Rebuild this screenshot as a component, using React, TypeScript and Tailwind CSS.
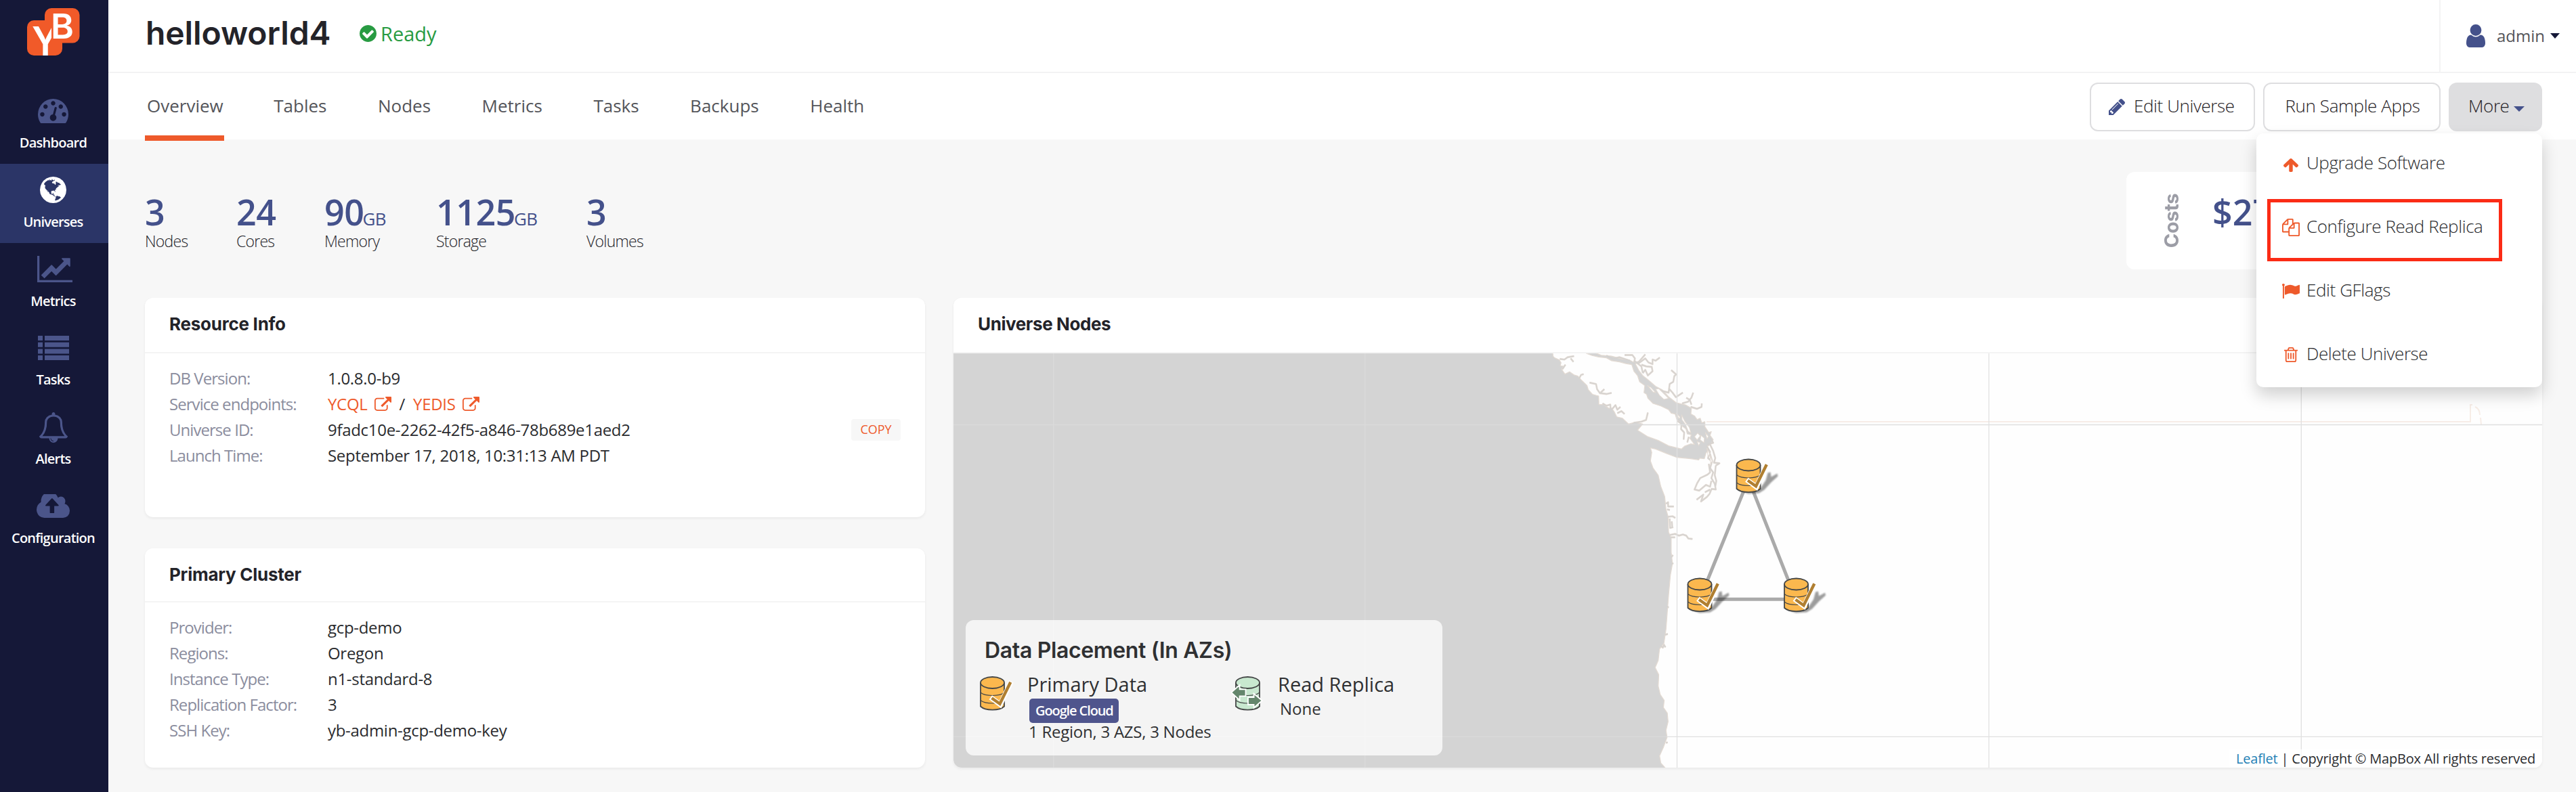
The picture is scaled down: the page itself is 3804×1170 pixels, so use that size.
import React from "react";

type GlyphProps = { d: string; box: string; className: string };

function Glyph({ d, box, className }: GlyphProps) {
  return (
    <svg viewBox={box} className={className} fill="currentColor" preserveAspectRatio="none" aria-hidden="true">
      <path d={d} />
    </svg>
  );
}

const ICON = {
  dashboard:
    "M384 1152q0-53-37.5-90.5t-90.5-37.5-90.5 37.5-37.5 90.5 37.5 90.5 90.5 37.5 90.5-37.5 37.5-90.5zm192-448q0-53-37.5-90.5t-90.5-37.5-90.5 37.5-37.5 90.5 37.5 90.5 90.5 37.5 90.5-37.5 37.5-90.5zm428 481l101-382q6-26-7.5-48.5t-38.5-29.5-48 6.5-30 39.5l-101 382q-60 5-107 43.5t-63 98.5q-20 77 20 146t117 89 146-20 89-117q16-60-6-117t-72-91zm660-33q0-53-37.5-90.5t-90.5-37.5-90.5 37.5-37.5 90.5 37.5 90.5 90.5 37.5 90.5-37.5 37.5-90.5zm-640-640q0-53-37.5-90.5t-90.5-37.5-90.5 37.5-37.5 90.5 37.5 90.5 90.5 37.5 90.5-37.5 37.5-90.5zm448 192q0-53-37.5-90.5t-90.5-37.5-90.5 37.5-37.5 90.5 37.5 90.5 90.5 37.5 90.5-37.5 37.5-90.5zm320 448q0 261-141 483-19 29-54 29h-1402q-35 0-54-29-141-221-141-483 0-182 71-348t191-286 286-191 348-71 348 71 286 191 191 286 71 348z",
  globe:
    "M896 128q209 0 385.5 103t279.5 279.5 103 385.5-103 385.5-279.5 279.5-385.5 103-385.5-103-279.5-279.5-103-385.5 103-385.5 279.5-279.5 385.5-103zm274 521q-2 1-9.5 9.5t-13.5 9.5q2 0 4.5-5t5-11 3.5-7q6-7 22-15 14-6 52-12 34-8 51 11-2-2 9.5-13t14.5-12q3-2 15-4.5t15-7.5l2-22q-12 1-17.5-7t-6.5-21q0 2-6 8 0-7-4.5-8t-11.5 1-9 1q-10-3-15-7.5t-8-16.5-4-15q-2-5-9.5-11t-9.5-10q-1-2-2.5-5.5t-3-6.5-4-5.5-5.5-2.5-7 5-7.5 10-4.5 5q-3-2-6-1.5t-4.5 1-4.5 3-5 3.5q-3 2-8.5 3t-8.5 2q15-5-1-11-10-4-16-3 9-4 7.5-12t-8.5-14h5q-1-4-8.5-8.5t-17.5-8.5-13-6q-8-5-34-9.5t-33-.5q-5 6-4.5 10.5t4 14 3.5 12.5q1 6-5.5 13t-6.5 12q0 7 14 15.5t10 21.5q-3 8-16 16t-16 12q-5 8-1.5 18.5t10.5 16.5q2 2 1.5 4t-3.5 4.5-5.5 4-6.5 3.5l-3 2q-11 5-20.5-6t-13.5-26q-7-25-16-30-23-8-29 1-5-13-41-26-25-9-58-4 6-1 0-15-7-15-19-12 3-6 4-17.5t1-13.5q3-13 12-23 1-1 7-8.5t9.5-13.5.5-6q35 4 50-11 5-5 11.5-17t10.5-17q9-6 14-5.5t14.5 5.5 14.5 5q14 1 15.5-11t-7.5-20q12 1 3-17-4-7-8-9-12-4-27 5-8 4 2 8-1-1-9.5 10.5t-16.5 17.5-16-5q-1-1-5.5-13.5t-9.5-13.5q-8 0-16 15 3-8-11-15t-24-8q19-12-8-27-7-4-20.5-5t-19.5 4q-5 7-5.5 11.5t5 8 10.5 5.5 11.5 4 8.5 3q14 10 8 14-2 1-8.5 3.5t-11.5 4.5-6 4q-3 4 0 14t-2 14q-5-5-9-17.5t-7-16.5q7 9-25 6l-10-1q-4 0-16 2t-20.5 1-13.5-8q-4-8 0-20 1-4 4-2-4-3-11-9.5t-10-8.5q-46 15-94 41 6 1 12-1 5-2 13-6.5t10-5.5q34-14 42-7l5-5q14 16 20 25-7-4-30-1-20 6-22 12 7 12 5 18-4-3-11.5-10t-14.5-11-15-5q-16 0-22 1-146 80-235 222 7 7 12 8 4 1 5 9t2.5 11 11.5-3q9 8 3 19 1-1 44 27 19 17 21 21 3 11-10 18-1-2-9-9t-9-4q-3 5 .5 18.5t10.5 12.5q-7 0-9.5 16t-2.5 35.5-1 23.5l2 1q-3 12 5.5 34.5t21.5 19.5q-13 3 20 43 6 8 8 9 3 2 12 7.5t15 10 10 10.5q4 5 10 22.5t14 23.5q-2 6 9.5 20t10.5 23q-1 0-2.5 1t-2.5 1q3 7 15.5 14t15.5 13q1 3 2 10t3 11 8 2q2-20-24-62-15-25-17-29-3-5-5.5-15.5t-4.5-14.5q2 0 6 1.5t8.5 3.5 7.5 4 2 3q-3 7 2 17.5t12 18.5 17 19 12 13q6 6 14 19.5t0 13.5q9 0 20 10.5t17 19.5q5 8 8 26t5 24q2 7 8.5 13.5t12.5 9.5l16 8 13 7q5 2 18.5 10.5t21.5 11.5q10 4 16 4t14.5-2.5 13.5-3.5q15-2 29 15t21 21q36 19 55 11-2 1 .5 7.5t8 15.5 9 14.5 5.5 8.5q5 6 18 15t18 15q6-4 7-9-3 8 7 20t18 10q14-3 14-32-31 15-49-18 0-1-2.5-5.5t-4-8.5-2.5-8.5 0-7.5 5-3q9 0 10-3.5t-2-12.5-4-13q-1-8-11-20t-12-15q-5 9-16 8t-16-9q0 1-1.5 5.5t-1.5 6.5q-13 0-15-1 1-3 2.5-17.5t3.5-22.5q1-4 5.5-12t7.5-14.5 4-12.5-4.5-9.5-17.5-2.5q-19 1-26 20-1 3-3 10.5t-5 11.5-9 7q-7 3-24 2t-24-5q-13-8-22.5-29t-9.5-37q0-10 2.5-26.5t3-25-5.5-24.5q3-2 9-9.5t10-10.5q2-1 4.5-1.5t4.5 0 4-1.5 3-6q-1-1-4-3-3-3-4-3 7 3 28.5-1.5t27.5 1.5q15 11 22-2 0-1-2.5-9.5t-.5-13.5q5 27 29 9 3 3 15.5 5t17.5 5q3 2 7 5.5t5.5 4.5 5-.5 8.5-6.5q10 14 12 24 11 40 19 44 7 3 11 2t4.5-9.5 0-14-1.5-12.5l-1-8v-18l-1-8q-15-3-18.5-12t1.5-18.5 15-18.5q1-1 8-3.5t15.5-6.5 12.5-8q21-19 15-35 7 0 11-9-1 0-5-3t-7.5-5-4.5-2q9-5 2-16 5-3 7.5-11t7.5-10q9 12 21 2 7-8 1-16 5-7 20.5-10.5t18.5-9.5q7 2 8-2t1-12 3-12q4-5 15-9t13-5l17-11q3-4 0-4 18 2 31-11 10-11-6-20 3-6-3-9.5t-15-5.5q3-1 11.5-.5t10.5-1.5q15-10-7-16-17-5-43 12zm-163 877q206-36 351-189-3-3-12.5-4.5t-12.5-3.5q-18-7-24-8 1-7-2.5-13t-8-9-12.5-8-11-7q-2-2-7-6t-7-5.5-7.5-4.5-8.5-2-10 1l-3 1q-3 1-5.5 2.5t-5.5 3-4 3 0 2.5q-21-17-36-22-5-1-11-5.5t-10.5-7-10-1.5-11.5 7q-5 5-6 15t-2 13q-7-5 0-17.5t2-18.5q-3-6-10.5-4.5t-12 4.5-11.5 8.5-9 6.5-8.5 5.5-8.5 7.5q-3 4-6 12t-5 11q-2-4-11.5-6.5t-9.5-5.5q2 10 4 35t5 38q7 31-12 48-27 25-29 40-4 22 12 26 0 7-8 20.5t-7 21.5q0 6 2 16z",
  metrics:
    "M2048 1536v128h-2048v-1536h128v1408h1920zm-128-1248v435q0 21-19.5 29.5t-35.5-7.5l-121-121-633 633q-10 10-23 10t-23-10l-233-233-416 416-192-192 585-585q10-10 23-10t23 10l233 233 464-464-121-121q-16-16-7.5-35.5t29.5-19.5h435q14 0 23 9t9 23z",
  tasks: "M0 0h7v7h-7zM10 0h36v7h-36zM0 9.7h7v7h-7zM10 9.7h36v7h-36zM0 19.4h7v7h-7zM10 19.4h36v7h-36zM0 29h7v7h-7zM10 29h36v7h-36z",
  bell:
    "M912 1696q0-16-16-16-59 0-101.5-42.5t-42.5-101.5q0-16-16-16t-16 16q0 73 51.5 124.5t124.5 51.5q16 0 16-16zm-666-288h1300q-266-300-266-832 0-51-24-105t-69-103-121.5-80.5-169.5-31.5-169.5 31.5-121.5 80.5-69 103-24 105q0 532-266 832zm1482 0q0 52-38 90t-90 38h-448q0 106-75 181t-181 75-181-75-75-181h-448q-52 0-90-38t-38-90q50-42 91-88t85-119.5 74.5-158.5 50-206 19.5-260q0-152 117-282.5t307-158.5q-8-19-8-39 0-40 28-68t68-28 68 28 28 68q0 20-8 39 190 28 307 158.5t117 282.5q0 139 19.5 260t50 206 74.5 158.5 85 119.5 91 88z",
  cloud:
    "M1216 864q0-14-9-23l-352-352q-9-9-23-9t-23 9l-351 351q-10 12-10 24 0 14 9 23t23 9h224v352q0 13 9.5 22.5t22.5 9.5h192q13 0 22.5-9.5t9.5-22.5v-352h224q13 0 22.5-9.5t9.5-22.5zm640 288q0 159-112.5 271.5t-271.5 112.5h-1088q-185 0-316.5-131.5t-131.5-316.5q0-130 70-240t188-165q-2-30-2-43 0-212 150-362t362-150q156 0 285.5 87t188.5 231q71-62 166-62 106 0 181 75t75 181q0 76-41 138 130 31 213.5 135.5t83.5 238.5z",
  check:
    "M1412 734q0-28-18-46l-91-90q-19-19-45-19t-45 19l-408 407-226-226q-19-19-45-19t-45 19l-91 90q-18 18-18 46 0 27 18 45l362 362q19 19 45 19 27 0 46-19l543-543q18-18 18-45zm252 162q0 209-103 385.5t-279.5 279.5-385.5 103-385.5-103-279.5-279.5-103-385.5 103-385.5 279.5-279.5 385.5-103 385.5 103 279.5 279.5 103 385.5z",
  user:
    "M1536 1399q0 109-62.5 187t-150.5 78h-854q-88 0-150.5-78t-62.5-187q0-85 8.5-160.5t31.5-152 58.5-131 94-89 134.5-34.5q131 128 313 128t313-128q76 0 134.5 34.5t94 89 58.5 131 31.5 152 8.5 160.5zm-256-887q0 159-112.5 271.5t-271.5 112.5-271.5-112.5-112.5-271.5 112.5-271.5 271.5-112.5 271.5 112.5 112.5 271.5z",
  pencil:
    "M491 1536l91-91-235-235-91 91v107h128v128h107zm523-928q0-22-22-22-10 0-17 7l-542 542q-7 7-7 17 0 22 22 22 10 0 17-7l542-542q7-7 7-17zm-54-192l416 416-832 832h-416v-416zm683 96q0 53-37 90l-166 166-416-416 166-165q36-38 90-38 53 0 91 38l235 234q37 39 37 91z",
  arrowUp:
    "M1675 971q0 51-37 90l-75 75q-38 38-91 38-54 0-90-38l-294-293v704q0 52-37.5 84.5t-90.5 32.5h-128q-53 0-90.5-32.5t-37.5-84.5v-704l-294 293q-36 38-90 38t-90-38l-75-75q-38-38-38-90 0-53 38-91l651-651q35-37 90-37 54 0 91 37l651 651q37 39 37 91z",
  copy:
    "M1696 384q40 0 68 28t28 68v1216q0 40-28 68t-68 28h-960q-40 0-68-28t-28-68v-288h-544q-40 0-68-28t-28-68v-672q0-40 20-88t48-76l408-408q28-28 76-48t88-20h416q40 0 68 28t28 68v328q68-40 128-40h416zm-544 213l-299 299h299v-299zm-640-384l-299 299h299v-299zm196 647l316-316v-416h-384v416q0 40-28 68t-68 28h-416v640h512v-256q0-40 20-88t48-76zm956 804v-1152h-384v416q0 40-28 68t-68 28h-416v640h896z",
  flag:
    "M320 256q0 72-64 110v1266q0 13-9.5 22.5t-22.5 9.5h-64q-13 0-22.5-9.5t-9.5-22.5v-1266q-64-38-64-110 0-53 37.5-90.5t90.5-37.5 90.5 37.5 37.5 90.5zm1472 64v763q0 25-12.5 38.5t-39.5 27.5q-215 116-369 116-61 0-123.5-22t-108.5-48-115.5-48-142.5-22q-192 0-464 146-17 9-33 9-26 0-45-19t-19-45v-742q0-32 31-55 21-14 79-43 236-120 421-120 107 0 200 29t219 88q38 19 88 19 54 0 117.5-21t110-47 88-47 54.5-21q26 0 45 19t19 45z",
  trash:
    "M704 736v576q0 14-9 23t-23 9h-64q-14 0-23-9t-9-23v-576q0-14 9-23t23-9h64q14 0 23 9t9 23zm256 0v576q0 14-9 23t-23 9h-64q-14 0-23-9t-9-23v-576q0-14 9-23t23-9h64q14 0 23 9t9 23zm256 0v576q0 14-9 23t-23 9h-64q-14 0-23-9t-9-23v-576q0-14 9-23t23-9h64q14 0 23 9t9 23zm128 724v-948h-896v948q0 22 7 40.5t14.5 27 10.5 8.5h832q3 0 10.5-8.5t14.5-27 7-40.5zm-672-1076h448l-48-117q-7-9-17-11h-317q-10 2-17 11zm928 32v64q0 14-9 23t-23 9h-96v948q0 83-47 143.5t-113 60.5h-832q-66 0-113-58.5t-47-141.5v-952h-96q-14 0-23-9t-9-23v-64q0-14 9-23t23-9h309l70-167q15-37 54-63t79-26h320q40 0 79 26t54 63l70 167h309q14 0 23 9t9 23z",
  external:
    "M1472 992v320q0 119-84.5 203.5t-203.5 84.5h-832q-119 0-203.5-84.5t-84.5-203.5v-832q0-119 84.5-203.5t203.5-84.5h704q14 0 23 9t9 23v64q0 14-9 23t-23 9h-704q-66 0-113 47t-47 113v832q0 66 47 113t113 47h832q66 0 113-47t47-113v-320q0-14 9-23t23-9h64q14 0 23 9t9 23zm384-864v512q0 26-19 45t-45 19-45-19l-176-176-652 652q-10 10-23 10t-23-10l-114-114q-10-10-10-23t10-23l652-652-176-176q-19-19-19-45t19-45 45-19h512q26 0 45 19t19 45z",
};

const NAV = [
  { label: "Dashboard", d: ICON.dashboard, box: "0 256 1792 1408", size: "w-[45px] h-9" },
  { label: "Universes", d: ICON.globe, box: "128 128 1536 1536", size: "w-[39px] h-[39px]", active: true },
  { label: "Metrics", d: ICON.metrics, box: "0 128 2048 1536", size: "w-[52px] h-[39px] ml-1" },
  { label: "Tasks", d: ICON.tasks, box: "0 0 46 36", size: "w-[46px] h-9" },
  { label: "Alerts", d: ICON.bell, box: "64 0 1664 1792", size: "w-[42px] h-[45px]" },
  { label: "Configuration", d: ICON.cloud, box: "-64 256 1920 1280", size: "w-[49px] h-[35px]" },
];

function Sidebar() {
  return (
    <aside className="flex h-full w-40 shrink-0 flex-col bg-[#151838]">
      <div className="h-[125px] shrink-0 pt-3 pl-10">
        <svg className="h-[71px] w-[78px] overflow-visible" viewBox="40 12 78 71">
          <rect x="66" y="12" width="51.5" height="51.5" rx="10" fill="#f15a29" />
          <rect x="40" y="30" width="52" height="52" rx="10" fill="#f15a29" />
          <text x="47" y="82" fontSize="59" fontWeight="600" fill="#fff" textLength="40" lengthAdjust="spacingAndGlyphs" fontFamily="Inter, sans-serif">Y</text>
          <rect x="76" y="31" width="16" height="26" fill="#f15a29" />
          <text x="75" y="56.5" fontSize="51" fontWeight="600" fill="#fff" textLength="34" lengthAdjust="spacingAndGlyphs" fontFamily="Inter, sans-serif">B</text>
        </svg>
      </div>
      <nav>
        {NAV.map((n) => (
          <a
            key={n.label}
            className={`flex h-[116.75px] flex-col items-center pt-[14px] pr-[3px] ${n.active ? "bg-[#2b3567] text-white" : "text-[#4b558a]"}`}
          >
            <span className="flex h-[50px] items-center justify-center">
              <Glyph d={n.d} box={n.box} className={n.size} />
            </span>
            <span className="mt-[8px] text-[20px] leading-7 font-semibold tracking-[-0.75px] text-white">{n.label}</span>
          </a>
        ))}
      </nav>
    </aside>
  );
}

function TopBar() {
  return (
    <header className="flex h-[108px] shrink-0 border-b-2 border-[#f3f3f4] bg-white pl-[55px]">
      <h1 className="h-[97px] w-[316px] font-[Inter] text-[48px] leading-[97px] font-semibold tracking-[-0.1px] text-[#232329]">
        helloworld4
      </h1>
      <div className="flex h-[98px] items-center text-[#289b42]">
        <Glyph d={ICON.check} box="128 128 1536 1536" className="h-[25px] w-[25px]" />
        <span className="ml-1.5 text-[29px] leading-none">Ready</span>
      </div>
      <div className="ml-auto flex h-full w-[202px] items-center border-l-2 border-[#f3f3f4] pl-[38px]">
        <Glyph d={ICON.user} box="256 128 1280 1536" className="h-[34px] w-7 text-[#44518b]" />
        <span className="ml-[17px] text-[24px] leading-none text-[#54555a]">admin</span>
        <svg viewBox="0 0 14 8" className="ml-2 h-2 w-3.5">
          <path d="M0 0h14l-7 8z" fill="#151838" />
        </svg>
      </div>
    </header>
  );
}

const MENU = [
  { label: "Upgrade Software", d: ICON.arrowUp, box: "117 192 1558 1472", size: "w-[22px] h-5 mt-1" },
  { label: "Configure Read Replica", d: ICON.copy, box: "0 0 1792 1792", size: "w-[26px] h-[26px]" },
  { label: "Edit GFlags", d: ICON.flag, box: "64 128 1728 1536", size: "w-[26px] h-[22px]" },
  { label: "Delete Universe", d: ICON.trash, box: "192 128 1408 1536", size: "w-5 h-[22px]" },
];

function MoreMenu() {
  return (
    <div className="absolute top-[75px] right-0 z-20 h-[375px] w-[422px] rounded-[10px] bg-white pt-[18px] shadow-[0_12px_24px_rgba(0,0,0,0.18)]">
      {MENU.map((m) => (
        <div key={m.label} className="flex h-[94px] items-start pl-9">
          <span className="mt-[10px] flex h-[34px] w-[30px] items-center justify-center text-[#ee5a2b]">
            <Glyph d={m.d} box={m.box} className={m.size} />
          </span>
          <span className="mt-px ml-2 text-[26px] leading-[48px] font-[350] tracking-[-0.4px] text-[#2a2b2e]">{m.label}</span>
        </div>
      ))}
      <div className="absolute top-[97px] left-4 h-[92px] w-[347px] border-[5px] border-[#fb2b15]" />
    </div>
  );
}

const TABS = ["Overview", "Tables", "Nodes", "Metrics", "Tasks", "Backups", "Health"];

function TabBar() {
  return (
    <div className="flex h-[98px] shrink-0 bg-white pr-[50px] pl-[54px]">
      <div className="flex gap-[71.5px] text-[26px] leading-[96px] text-[#54555a]">
        {TABS.map((t, i) => (
          <a key={t} className={i === 0 ? "relative h-[100px] border-b-8 border-[#ee5a2b] pr-px pl-[3px]" : "px-0.5"}>
            {t}
          </a>
        ))}
      </div>
      <div className="relative mt-3.5 ml-auto flex h-[72px] text-[26px] leading-[64px] font-[350] tracking-[-0.4px] text-[#1f2024]">
        <button className="flex w-[244px] items-center rounded-[12px] border-2 border-[#dedee0] pl-[26px]">
          <Glyph d={ICON.pencil} box="128 149 1515 1515" className="h-6 w-6 text-[#44518b]" />
          <span className="-mt-1 ml-[13px]">Edit Universe</span>
        </button>
        <button className="ml-3 flex w-[262px] justify-center rounded-[12px] border-2 border-[#dedee0] pl-0.5">Run Sample Apps</button>
        <button className="ml-3 flex w-[138px] items-center rounded-[12px] bg-[#dedee0] pl-[29px]">
          <span className="-mt-1">More</span>
          <svg viewBox="0 0 16 8" className="mt-1.5 ml-1.5 h-2 w-4">
            <path d="M0 0h16l-8 8z" fill="#44518b" />
          </svg>
        </button>
        <MoreMenu />
      </div>
    </div>
  );
}

const STATS = [
  { value: "3", label: "Nodes", w: "w-[135px]" },
  { value: "24", label: "Cores", w: "w-[130px]" },
  { value: "90", unit: "GB", label: "Memory", w: "w-[165px]" },
  { value: "1125", unit: "GB", label: "Storage", w: "w-[222px]" },
  { value: "3", label: "Volumes", w: "w-[120px]" },
];

function Stats() {
  return (
    <div className="flex h-[234px] shrink-0">
      <div className="flex flex-1 pt-[71px]">
        {STATS.map((s) => (
          <div key={s.label} className={`shrink-0 ${s.w}`}>
            <div className="flex h-[64px] items-baseline text-[52px] leading-[72px] font-semibold text-[#44518b]">
              <span className="tracking-[-0.5px]">{s.value}</span>
              {s.unit && <span className="-ml-0.5 text-[26px] font-normal tracking-[-0.5px]">{s.unit}</span>}
            </div>
            <div className="text-[23px] leading-[30px] font-[350] tracking-[-0.75px] text-[#232329]">{s.label}</div>
          </div>
        ))}
      </div>
      <div className="mt-12 flex h-36 w-[614px] rounded-[12px] bg-white">
        <div className="flex w-[127px] items-center justify-center pl-1.5">
          <span className="rotate-180 font-[Inter] text-[29px] leading-9 font-bold tracking-[-0.4px] text-[#9c9da6] [writing-mode:vertical-rl]">
            Costs
          </span>
        </div>
        <span className="mt-[23px] text-[52px] leading-[72px] font-semibold text-[#44518b]">$27</span>
      </div>
    </div>
  );
}

function Link({ children }: { children: React.ReactNode }) {
  return (
    <a className="flex items-center text-[#ee5a2b]">
      {children}
      <Glyph d={ICON.external} box="64 64 1792 1536" className="ml-2.5 h-[21px] w-[25px]" />
    </a>
  );
}

function InfoCard({ title, rows, head }: { title: string; rows: [string, React.ReactNode][]; head: string }) {
  return (
    <section className="h-[324px] rounded-[12px] bg-white shadow-[0_2px_4px_rgba(0,0,0,0.06)]">
      <h2 className={`border-b-2 border-[#f4f4f4] pl-9 font-[Inter] text-[26px] font-[650] tracking-[-0.25px] text-[#232329] ${head}`}>
        {title}
      </h2>
      <dl className="grid grid-cols-[234px_1fr] pt-[17.5px] pr-9 pl-9 text-[24px] leading-[38px] auto-rows-[38px]">
        {rows.map(([k, v]) => (
          <React.Fragment key={k}>
            <dt className="tracking-[-0.95px] text-[#8b8d9e]">{k}</dt>
            <dd className="tracking-[-0.3px] text-[#2a2b2e]">{v}</dd>
          </React.Fragment>
        ))}
      </dl>
    </section>
  );
}

function Database({ replica = false }: { replica?: boolean }) {
  return (
    <g stroke="#454747" strokeWidth="1.8">
      <path
        d="M1 9.5V44.5C8 51.3 29 51.3 36 44.5V9.5"
        fill={replica ? "#c8e8cf" : "#fbb84e"}
      />
      <path d="M1 24C8 30 29 30 36 24M1 35.5C8 41.5 29 41.5 36 35.5" fill="none" strokeWidth="1.1" />
      <ellipse cx="18.5" cy="9.5" rx="17.5" ry="8.5" fill={replica ? "#c8e8cf" : "#fbb84e"} />
      {replica ? (
        <g fill="#64866c" stroke="#fff" strokeWidth="1.8">
          <path d="M-5.8 24L6.6 13V19.3H15.5V29.3H6.6V35.5z" />
          <path d="M39.8 36L27.6 25.8V31H19V42H27.6V46.5z" />
        </g>
      ) : (
        <g fill="none">
          <path d="M15.5 31L29.8 41.5L46 7.5" stroke="#fff" strokeWidth="7.5" transform="translate(.3 .3)" />
          <path d="M17.5 32.2L29.5 40.7L45.3 8.7" stroke="#b07f31" strokeWidth="4.4" />
        </g>
      )}
    </g>
  );
}

const OCEAN =
  "M-2075 1520V40H242L244 62 250 68 268 75 275 85 272 96 285 98 277 108 290 125 308 117 325 128 340 132 352 145 375 165 380 180 396 196 410 200 420 202 421 232 440 232 448 238 460 245 470 244 480 257 490 275 512 280 535 300 560 294 590 300 570 322 610 345 650 358 690 377 740 388 752 378 775 370 790 372 772 350 778 338 762 335 757 318 744 308 735 295 722 285 715 265 700 262 690 250 660 237 630 228 610 210 605 196 595 190 598 165 578 152 570 130 556 115 548 92 525 88 500 82 470 78 450 68 420 65 395 60 372 52V46H396L430 59 470 62 510 72 540 76 560 86 575 112 590 130 612 146 640 168 665 180 690 205 720 226 755 233 778 245 776 265 790 272 800 285 812 280 818 296 830 292 830 310 845 330 855 327 850 340 862 355 852 372 840 378 848 395 835 400 828 422 810 420 806 426 775 422 720 417 680 403 640 388 620 384 625 400 620 430 630 455 650 480 660 520 675 555 680 600 688 625 690 680 700 700 700 750 705 790 697 830 690 900 685 960 680 1020 672 1070 655 1090 650 1130 638 1155 652 1180 650 1220 658 1250 673 1270 670 1295 685 1315 688 1345 680 1375 684 1400 670 1435 655 1465 660 1490 676 1506V1520z";

const INLETS =
  "M270 72L288 74 300 66 325 62M312 70L323 82M280 108L292 92M345 140L352 128 362 125M385 155L410 160 414 178 425 192 450 195 470 191M442 178L428 190M435 228L450 236 465 232 466 248M470 250L485 234 492 250 504 240M492 262L508 255 520 265M555 296L585 292 603 286 610 260M450 60L475 72 500 66 540 78M520 58L550 58 560 70 556 88 575 82 600 56M570 90L600 70 612 84 628 90 628 74 640 78 656 67M585 92L604 98 625 100 628 115 610 130 600 110 590 122M560 80L585 98 590 120M655 182L690 190 694 160 708 152 712 132 719 126 700 111M690 175L705 190 718 206 745 190M742 228L765 222 778 208 785 190M758 208L772 216 778 232M775 240L800 247 817 240 818 228M725 290L740 300 738 318 750 330 748 355M768 345L762 365M850 350L862 366 840 372M838 380L850 398 842 420 856 430M850 372L862 395 870 420 865 436 886 438 872 446M848 400L858 430 850 455 862 470 855 490 868 510 872 530 856 528 848 545 838 556 815 572 824 548 798 566M872 446L868 480 874 500 870 520M845 440L850 470 840 478 812 490 800 508 790 530 808 534 834 514 850 520 855 500M830 540L850 530M680 580L688 575 688 590 710 590M684 600L695 602M688 626L705 624 716 630M694 632L696 665 708 662M702 642L704 660M694 690L715 686 730 692 745 688 758 692 766 702 782 704M698 698L715 698M700 768L707 760M702 792L708 788M658 1078L668 1085 672 1075 678 1084M676 1040L687 1037M684 940L690 945M680 1420L686 1417";

const ISLANDS =
  "M640 178L652 176 690 210 672 214 655 200zM608 165L622 172 640 190 630 188zM740 268L752 290 770 312 776 332 766 326 755 302 742 286zM720 262L734 276 730 282zM790 345L802 332 812 342 800 356zM815 340L828 350 826 366 812 356zM800 362L812 366 806 376zM832 330L844 344 838 352zM838 385L848 405 842 415zM850 410L858 430 852 440z";

function MapView() {
  return (
    <svg viewBox="1408 522 2346 612" className="block h-[612px] w-full">
      <defs>
        <filter id="soft" x="-20%" y="-20%" width="140%" height="140%">
          <feGaussianBlur stdDeviation="1.3" />
        </filter>
      </defs>
      <rect x="1408" y="522" width="2346" height="612" fill="#fefefe" />
      <path d="M2520 623H3648V598h3M3655 601q7 3 7 12M3663 617l1 10" fill="none" stroke="#f7ede7" strokeWidth="2" />
      <g transform="translate(2200 500) scale(.3827 .4209)" strokeLinejoin="round">
        <path d={INLETS} fill="none" stroke="#e6ddd5" strokeWidth="7" />
        <path d={OCEAN} fill="#d4d4d4" stroke="#e3dad2" strokeWidth="3" />
        <path d={INLETS} fill="none" stroke="#d4d2d0" strokeWidth="3.6" />
        <path d={ISLANDS} fill="#fefefe" stroke="#e3dad2" strokeWidth="2.5" />
      </g>
      <g strokeWidth="1.3" stroke="#e0e0e0">
        <path d="M2476.5 522v612M2937 522v612M3398.3 522v612M2476 627.5H3754M2461 1088.3H3754" />
        <path d="M1555.6 522v612M2015.6 522v612M1408 627.5H2476M1408 1088.3H2461" stroke="#dadada" />
      </g>
      <path d="M2582 708L2510 885.3H2652z" fill="none" stroke="#aaa" strokeWidth="5" />
      {[
        [2563.5, 677.5],
        [2491.5, 853.5],
        [2634, 853.5],
      ].map(([x, y]) => (
        <g key={x} transform={`translate(${x} ${y})`}>
          <path
            d="M4 47L36 44 44 32 47 21 51 20 52 27 61 22 62 26 52 35 42 46 34 51 18 52z"
            fill="#000"
            opacity=".38"
            filter="url(#soft)"
          />
          <Database />
        </g>
      ))}
    </svg>
  );
}

function Legend() {
  return (
    <div className="absolute bottom-[18px] left-[18px] h-[200px] w-[704px] rounded-[12px] bg-white/75 text-[#2f3032]">
      <h3 className="pt-9 pl-7 font-[Inter] text-[32px] leading-[18px] font-semibold tracking-[-0.35px]">Data Placement (In AZs)</h3>
      <div className="flex pt-[29px] pl-3">
        <svg className="h-[54px] w-[62px] shrink-0" viewBox="-9 0 62 54">
          <Database />
        </svg>
        <div className="ml-[17px] w-[300px]">
          <div className="text-[29px] leading-[24px]">Primary Data</div>
          <div className="mt-[9px] ml-[3px] h-9 w-[132px] rounded-[5px] bg-[#4f558d] pl-[9px] text-[20px] leading-9 font-semibold tracking-[-1.1px] whitespace-nowrap text-white">
            Google Cloud
          </div>
          <div className="ml-0.5 text-[24px] leading-[26px] tracking-[-0.25px]">1 Region, 3 AZS, 3 Nodes</div>
        </div>
        <svg className="-ml-[2px] h-[54px] w-[62px] shrink-0" viewBox="-9 0 62 54">
          <Database replica />
        </svg>
        <div className="ml-2.5">
          <div className="text-[29px] leading-[24px]">Read Replica</div>
          <div className="mt-1.5 ml-[3px] text-[24px] leading-9">None</div>
        </div>
      </div>
    </div>
  );
}

function NodesCard() {
  return (
    <section className="h-[694px] w-[2346px] overflow-hidden rounded-[12px] bg-white shadow-[0_2px_4px_rgba(0,0,0,0.06)]">
      <h2 className="h-[82px] border-b-2 border-[#f4f4f4] pl-9 font-[Inter] text-[26px] leading-[77px] font-[650] tracking-[-0.4px] text-[#232329]">
        Universe Nodes
      </h2>
      <div className="relative">
        <MapView />
        <Legend />
        <div className="absolute right-0 bottom-0 bg-white/70 pr-2.5 pl-2.5 text-[20px] leading-[27px] font-[450] tracking-[-0.2px] text-[#2a2b2e]">
          <span className="text-[#1f7fb5]">Leaflet</span>
          <span> | </span>
          Copyright © MapBox All rights reserved
        </div>
      </div>
    </section>
  );
}

export default function App() {
  return (
    <div className="flex h-[1170px] w-[3804px] overflow-hidden bg-[#f7f7f7] font-['Open_Sans',sans-serif]">
      <Sidebar />
      <main className="flex min-w-0 flex-1 flex-col">
        <TopBar />
        <TabBar />
        <div className="flex flex-col pr-[50px] pl-[54px]">
          <Stats />
          <div className="flex gap-[42px]">
            <div className="flex w-[1152px] flex-col gap-[46px]">
              <InfoCard
                title="Resource Info"
                head="h-[82px] leading-[77px]"
                rows={[
                  ["DB Version:", "1.0.8.0-b9"],
                  [
                    "Service endpoints:",
                    <span key="e" className="flex">
                      <Link>YCQL</Link>
                      <span className="mx-3">/</span>
                      <Link>YEDIS</Link>
                    </span>,
                  ],
                  [
                    "Universe ID:",
                    <span key="u" className="flex items-center justify-between">
                      9fadc10e-2262-42f5-a846-78b689e1aed2
                      <button className="h-8 w-[73px] rounded bg-[#f7f7f7] text-[18px] leading-[29px] tracking-normal text-[#ee5a2b]">COPY</button>
                    </span>,
                  ],
                  ["Launch Time:", "September 17, 2018, 10:31:13 AM PDT"],
                ]}
              />
              <InfoCard
                title="Primary Cluster"
                head="h-20 leading-[77px]"
                rows={[
                  ["Provider:", "gcp-demo"],
                  ["Regions:", "Oregon"],
                  ["Instance Type:", "n1-standard-8"],
                  ["Replication Factor:", "3"],
                  ["SSH Key:", "yb-admin-gcp-demo-key"],
                ]}
              />
            </div>
            <NodesCard />
          </div>
        </div>
      </main>
    </div>
  );
}
